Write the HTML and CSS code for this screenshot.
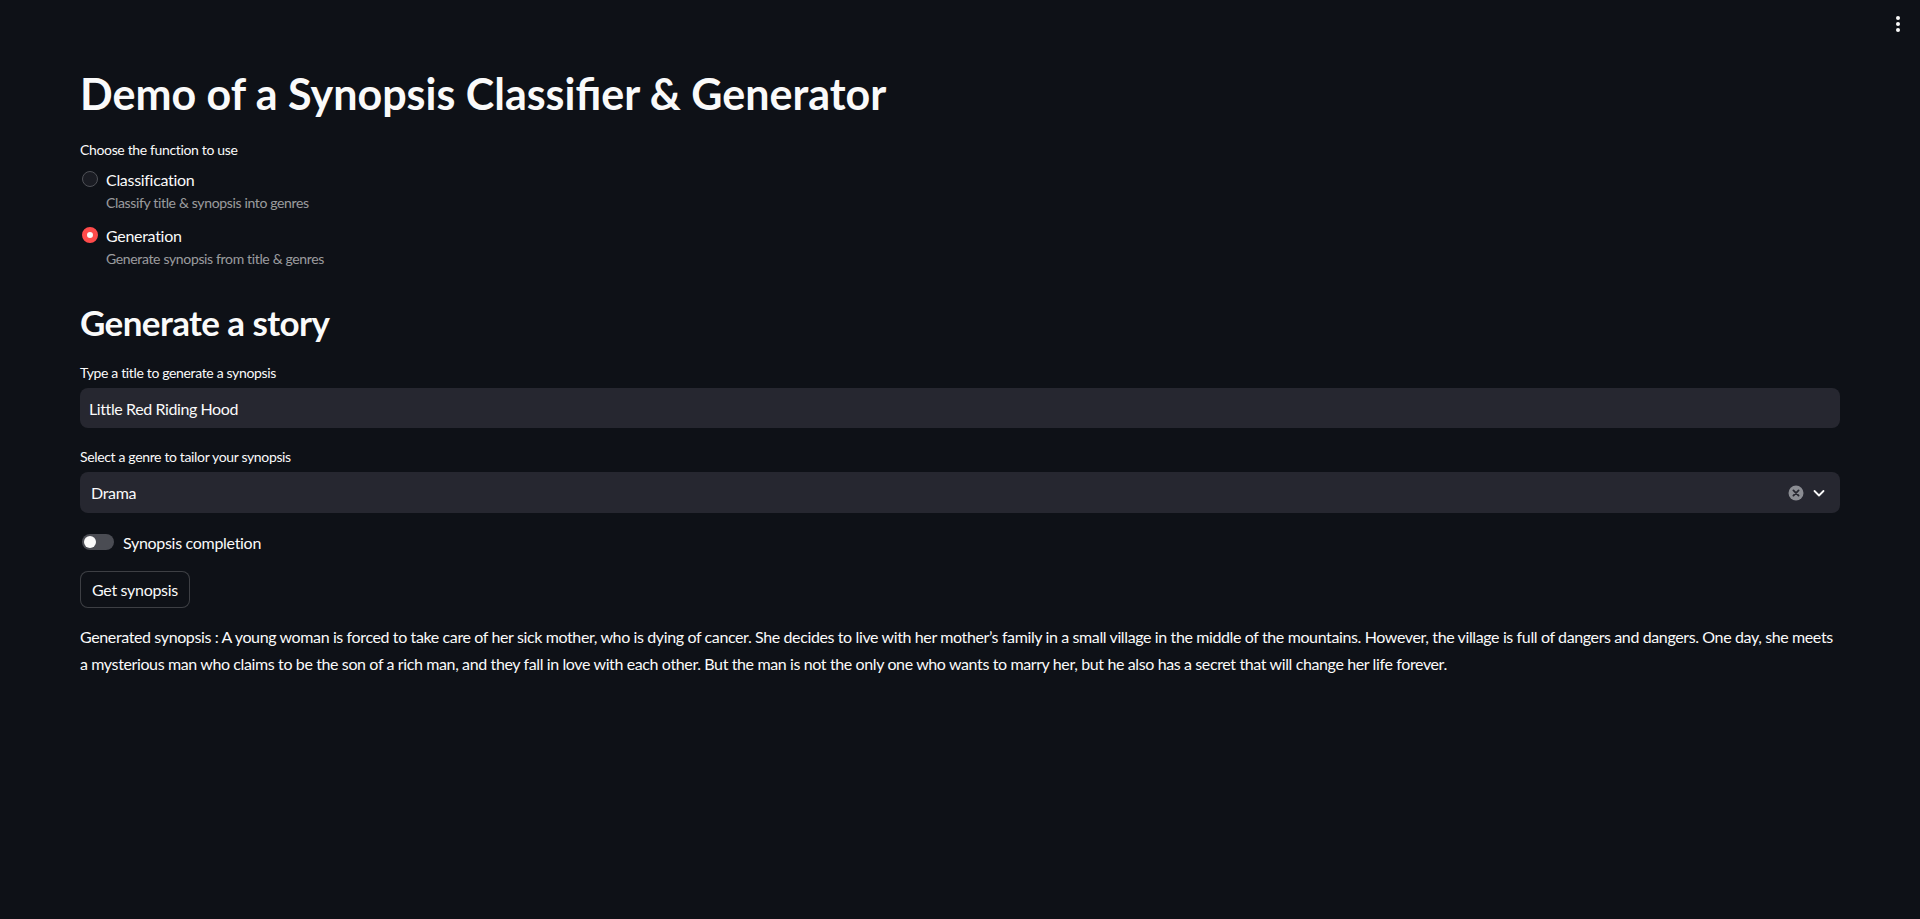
FILE: index.html
```html
<!DOCTYPE html>
<html lang="en">
<head>
  <meta charset="UTF-8">
  <meta name="viewport" content="width=device-width, initial-scale=1.0">
  <title>Synopsis Classifier & Generator</title>
  <link rel="stylesheet" href="styles.css">
</head>
<body>
  <div class="menu-btn" title="Main menu">
    <svg width="6" height="18" viewBox="0 0 6 18"><circle cx="3" cy="3" r="2" fill="#fafafa"/><circle cx="3" cy="9" r="2" fill="#fafafa"/><circle cx="3" cy="15" r="2" fill="#fafafa"/></svg>
  </div>

  <main class="main">
    <h1 class="title">Demo of a Synopsis Classifier &amp; Generator</h1>

    <div class="widget-label label-radio">Choose the function to use</div>
    <div class="radio-group">
      <div class="radio-option">
        <span class="radio-dot"></span>
        <div class="radio-text">
          <div class="radio-name">Classification</div>
          <div class="radio-caption">Classify title &amp; synopsis into genres</div>
        </div>
      </div>
      <div class="radio-option">
        <span class="radio-dot checked"></span>
        <div class="radio-text">
          <div class="radio-name">Generation</div>
          <div class="radio-caption">Generate synopsis from title &amp; genres</div>
        </div>
      </div>
    </div>

    <h2 class="subtitle">Generate a story</h2>

    <div class="widget-label">Type a title to generate a synopsis</div>
    <div class="text-input">Little Red Riding Hood</div>

    <div class="widget-label">Select a genre to tailor your synopsis</div>
    <div class="select-box">
      <span class="select-value">Drama</span>
      <span class="select-icons">
        <svg class="clear-icon" width="16" height="16" viewBox="0 0 16 16"><circle cx="8" cy="8" r="7.5" fill="#8b8d93"/><path d="M5.4 5.4 L10.6 10.6 M10.6 5.4 L5.4 10.6" stroke="#262730" stroke-width="1.8" stroke-linecap="round"/></svg>
        <svg class="chevron-icon" width="14" height="14" viewBox="0 0 14 14"><path d="M2.5 5 L7 9.5 L11.5 5" fill="none" stroke="#fafafa" stroke-width="1.8" stroke-linecap="round" stroke-linejoin="round"/></svg>
      </span>
    </div>

    <div class="toggle-row">
      <span class="toggle"><span class="toggle-knob"></span></span>
      <span class="toggle-label">Synopsis completion</span>
    </div>

    <button class="btn">Get synopsis</button>

    <p class="synopsis">Generated synopsis : A young woman is forced to take care of her sick mother, who is dying of cancer. She decides to live with her mother’s family in a small village in the middle of the mountains. However, the village is full of dangers and dangers. One day, she meets a&nbsp;mysterious man who claims to be the son of a rich man, and they fall in love with each other. But the man is not the only one who wants to marry her, but he also has a secret that will change her life forever.</p>
  </main>
</body>
</html>
```

FILE: styles.css
```css
body {
  margin: 0;
  background-color: #0e1117;
  color: #fafafa;
  font-family: Lato, "Noto Sans", sans-serif;
  letter-spacing: -0.3px;
}
.menu-btn {
  position: absolute;
  top: 15px;
  right: 19px;
  width: 6px;
  height: 18px;
}
.main {
  padding: 67px 80px 60px 80px;
}
.title {
  margin: 0;
  font-size: 43px;
  line-height: 53px;
  font-weight: 700;
  letter-spacing: 0;
}
.widget-label {
  font-size: 14px;
  line-height: 22px;
  margin-top: 18px;
  letter-spacing: -0.35px;
}
.label-radio {
  margin-top: 19px;
}
.radio-group {
  margin-top: 7px;
  display: flex;
  flex-direction: column;
  gap: 11px;
}
.radio-option {
  display: flex;
  align-items: flex-start;
  gap: 8px;
  padding-left: 2px;
}
.radio-dot {
  box-sizing: border-box;
  width: 16px;
  height: 16px;
  margin-top: 3px;
  border-radius: 50%;
  border: 1px solid #4f5157;
  background-color: #1a1c23;
}
.radio-dot.checked {
  border: 5px solid #ff4b4b;
  background-color: #fafafa;
}
.radio-name {
  font-size: 16px;
  line-height: 24px;
}
.radio-caption {
  font-size: 14px;
  line-height: 20px;
  margin-top: 1px;
  letter-spacing: -0.35px;
  color: rgba(250, 250, 250, 0.6);
}
.subtitle {
  margin: 32px 0 0 0;
  font-size: 35px;
  line-height: 43px;
  font-weight: 700;
  letter-spacing: -0.6px;
}
.text-input {
  margin-top: 4px;
  height: 40px;
  box-sizing: border-box;
  padding: 0 9px;
  display: flex;
  align-items: center;
  background-color: #262730;
  border-radius: 8px;
  font-size: 16px;
  letter-spacing: -0.4px;
}
.select-box {
  margin-top: 4px;
  height: 41px;
  box-sizing: border-box;
  padding: 0 14px 0 11px;
  display: flex;
  align-items: center;
  justify-content: space-between;
  background-color: #262730;
  border-radius: 8px;
  font-size: 16px;
}
.select-icons {
  display: flex;
  align-items: center;
  gap: 8px;
}
.toggle-row {
  margin-top: 17px;
  display: flex;
  align-items: center;
  gap: 9px;
  height: 24px;
  padding-left: 2px;
}
.toggle {
  position: relative;
  width: 32px;
  height: 16px;
  border-radius: 8px;
  background-color: #4a4c53;
}
.toggle-knob {
  position: absolute;
  top: 2px;
  left: 2px;
  width: 12px;
  height: 12px;
  border-radius: 50%;
  background-color: #fafafa;
}
.toggle-label {
  font-size: 16px;
}
.btn {
  display: block;
  margin-top: 17px;
  height: 37px;
  padding: 0 11px;
  background-color: #0e1117;
  color: #fafafa;
  border: 1px solid rgba(250, 250, 250, 0.2);
  border-radius: 8px;
  font-family: inherit;
  font-size: 16px;
  letter-spacing: -0.3px;
}
.synopsis {
  margin: 16px 0 0 0;
  font-size: 16px;
  line-height: 26.5px;
  letter-spacing: -0.38px;
}
```
